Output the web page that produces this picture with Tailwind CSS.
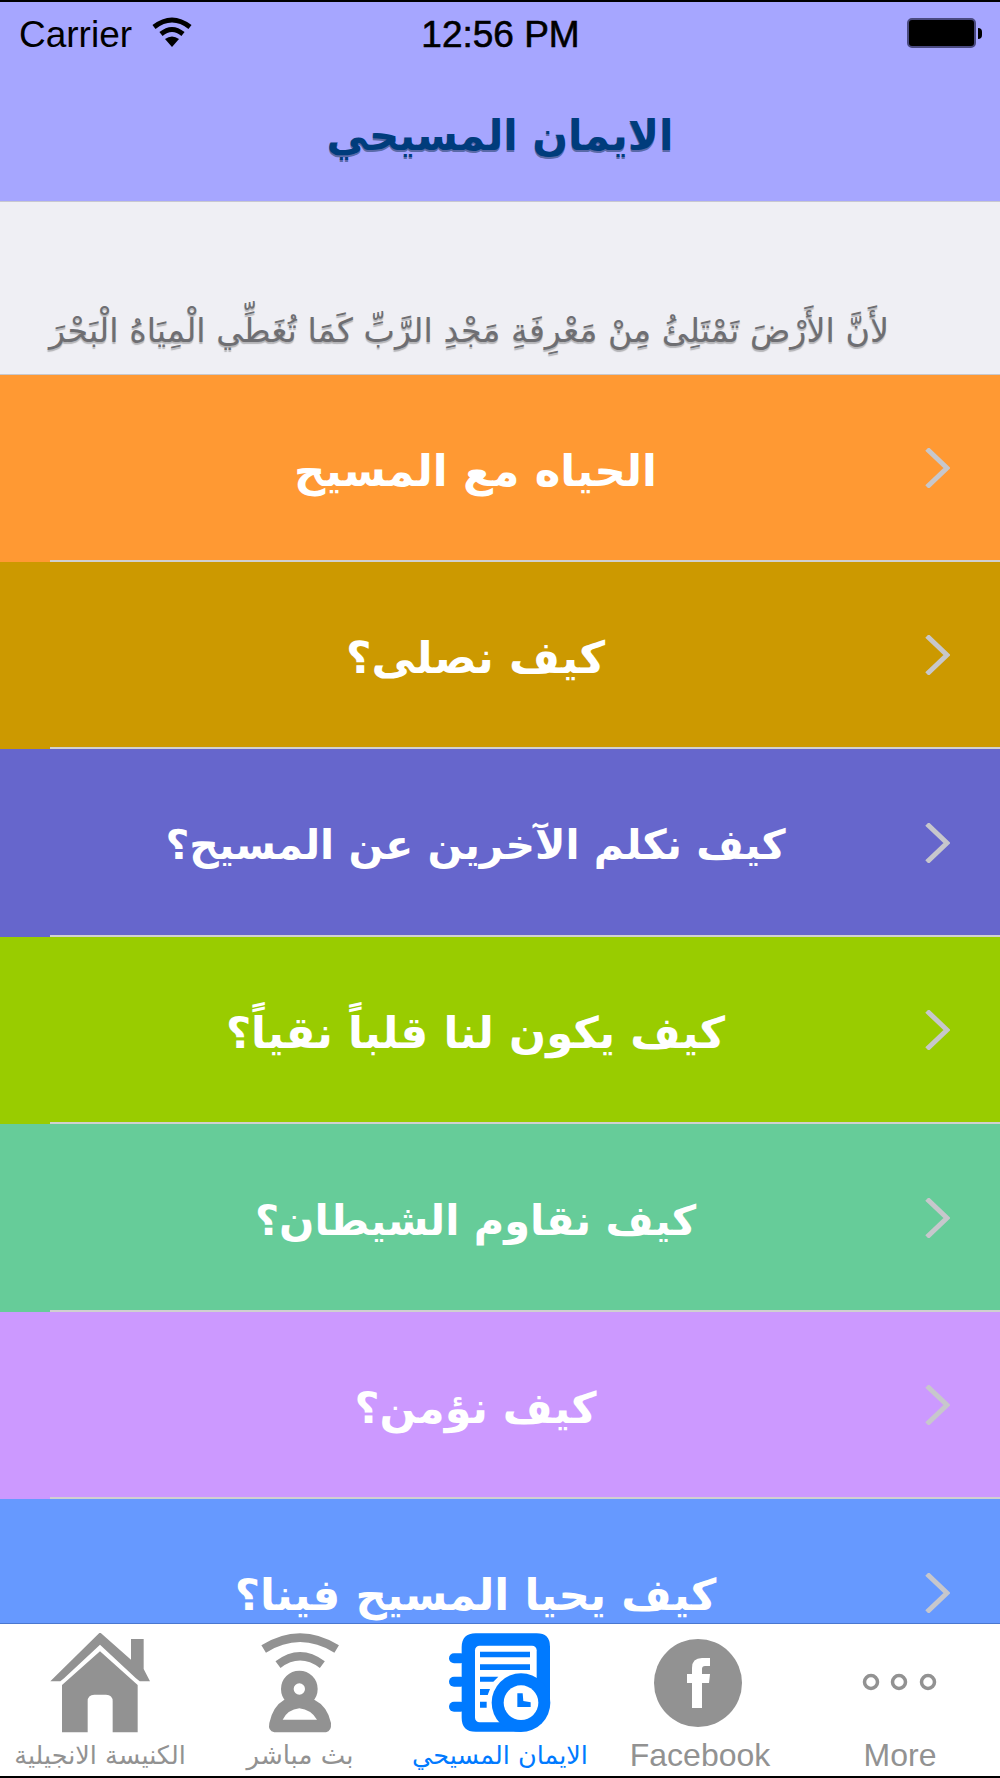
<!DOCTYPE html>
<html lang="ar">
<head>
  <meta charset="UTF-8" />
  <title>الايمان المسيحي</title>
  <script src="https://cdn.jsdelivr.net/npm/@tailwindcss/browser@4"></script>
</head>
<body class="bg-white font-['Liberation_Sans','DejaVu_Sans',sans-serif]">
  <div class="flex flex-col h-[1778px] w-[1000px] overflow-hidden border-y-2 border-black">

    <!-- Header -->
    <header class="h-[200px] shrink-0 bg-[#a6a6ff] border-b border-[#c8c8d0]">
      <div class="grid grid-cols-3 items-center h-[66px] pl-[19px] pr-[18px] text-[37px] text-black">
        <div class="flex items-center gap-[20px]">
          <span>Carrier</span>
          <svg class="w-[40px] h-[30px] mb-[6px]" viewBox="0 0 40 30" fill="none" stroke="black" stroke-width="5">
            <path d="M2 10 Q20 -4 38 10" />
            <path d="M9 17 Q20 8 31 17" />
            <path d="M20 30 L13 22 Q20 17 27 22 Z" fill="black" stroke="none" />
          </svg>
        </div>
        <span class="justify-self-center [-webkit-text-stroke:0.6px_black]">12:56 PM</span>
        <div class="flex items-center justify-self-end mb-[4px] gap-[2px]">
          <div class="w-[69px] h-[30px] rounded-[5px] bg-black border-2 border-[#4a4a80]"></div>
          <div class="w-[4px] h-[11px] bg-black rounded-r-full"></div>
        </div>
      </div>
      <h1 dir="rtl" class="pt-[18px] text-center font-bold text-[42px] leading-[100px] text-[#003c7c] [text-shadow:0_2px_0_#5a6aa8] font-['DejaVu_Sans',sans-serif]">الايمان المسيحي</h1>
    </header>

    <!-- Verse -->
    <section class="h-[173px] shrink-0 flex items-end justify-center bg-[#efeff4] pb-[13px] pr-[62px] border-b border-[#c8c8cc]">
      <p dir="rtl" class="text-[33.4px] leading-[60px] text-[#6e6e72] [text-shadow:0_2px_1px_#b5b5b8] whitespace-nowrap font-['DejaVu_Sans',sans-serif]">لأَنَّ الأَرْضَ تَمْتَلِئُ مِنْ مَعْرِفَةِ مَجْدِ الرَّبِّ كَمَا تُغَطِّي الْمِيَاهُ الْبَحْرَ</p>
    </section>

    <!-- List -->
    <main class="flex-1 min-h-0 overflow-hidden font-['DejaVu_Sans',sans-serif]">
      <a class="relative flex items-center h-[186.5px] bg-[#ff9933] pl-[26px] pr-[50px]">
        <span dir="rtl" class="flex-1 text-center text-white font-bold text-[43.5px] pt-[6px]">الحياه مع المسيح</span>
        <svg class="w-[25px] h-[40px]" viewBox="0 0 25 40" fill="none" stroke="#c7c7cc" stroke-width="5"><path d="M2 1 L22 20 L2 39" /></svg>
        <div class="absolute bottom-0 left-[50px] right-0 h-[2px] bg-[#d0d0d0]"></div>
      </a>
      <a class="relative flex items-center h-[187.5px] bg-[#cc9900] pl-[26px] pr-[50px]">
        <span dir="rtl" class="flex-1 text-center text-white font-bold text-[44px] pt-[6px]">كيف نصلى؟</span>
        <svg class="w-[25px] h-[40px]" viewBox="0 0 25 40" fill="none" stroke="#c7c7cc" stroke-width="5"><path d="M2 1 L22 20 L2 39" /></svg>
        <div class="absolute bottom-0 left-[50px] right-0 h-[2px] bg-[#d0d0d0]"></div>
      </a>
      <a class="relative flex items-center h-[187.5px] bg-[#6666cc] pl-[26px] pr-[50px]">
        <span dir="rtl" class="flex-1 text-center text-white font-bold text-[41px] pt-[6px]">كيف نكلم الآخرين عن المسيح؟</span>
        <svg class="w-[25px] h-[40px]" viewBox="0 0 25 40" fill="none" stroke="#c7c7cc" stroke-width="5"><path d="M2 1 L22 20 L2 39" /></svg>
        <div class="absolute bottom-0 left-[50px] right-0 h-[2px] bg-[#d0d0d0]"></div>
      </a>
      <a class="relative flex items-center h-[187.5px] bg-[#99cc00] pl-[26px] pr-[50px]">
        <span dir="rtl" class="flex-1 text-center text-white font-bold text-[43.5px] pt-[6px]">كيف يكون لنا قلباً نقياً؟</span>
        <svg class="w-[25px] h-[40px]" viewBox="0 0 25 40" fill="none" stroke="#c7c7cc" stroke-width="5"><path d="M2 1 L22 20 L2 39" /></svg>
        <div class="absolute bottom-0 left-[50px] right-0 h-[2px] bg-[#d0d0d0]"></div>
      </a>
      <a class="relative flex items-center h-[187.5px] bg-[#66cc99] pl-[26px] pr-[50px]">
        <span dir="rtl" class="flex-1 text-center text-white font-bold text-[41.5px] pt-[6px]">كيف نقاوم الشيطان؟</span>
        <svg class="w-[25px] h-[40px]" viewBox="0 0 25 40" fill="none" stroke="#c7c7cc" stroke-width="5"><path d="M2 1 L22 20 L2 39" /></svg>
        <div class="absolute bottom-0 left-[50px] right-0 h-[2px] bg-[#d0d0d0]"></div>
      </a>
      <a class="relative flex items-center h-[187.5px] bg-[#cc99ff] pl-[26px] pr-[50px]">
        <span dir="rtl" class="flex-1 text-center text-white font-bold text-[43px] pt-[6px]">كيف نؤمن؟</span>
        <svg class="w-[25px] h-[40px]" viewBox="0 0 25 40" fill="none" stroke="#c7c7cc" stroke-width="5"><path d="M2 1 L22 20 L2 39" /></svg>
        <div class="absolute bottom-0 left-[50px] right-0 h-[2px] bg-[#d0d0d0]"></div>
      </a>
      <a class="relative flex items-center h-[187.5px] bg-[#6699ff] pl-[26px] pr-[50px]">
        <span dir="rtl" class="flex-1 text-center text-white font-bold text-[43.5px] pt-[6px]">كيف يحيا المسيح فينا؟</span>
        <svg class="w-[25px] h-[40px]" viewBox="0 0 25 40" fill="none" stroke="#c7c7cc" stroke-width="5"><path d="M2 1 L22 20 L2 39" /></svg>
      </a>
    </main>

    <!-- Tab bar -->
    <nav class="h-[153px] shrink-0 grid grid-cols-5 bg-white border-t border-[#4a78d0] text-[#929292] font-['Liberation_Sans','DejaVu_Sans',sans-serif]">
      <div class="flex flex-col items-center pt-[9px]">
        <svg class="w-[100px] h-[100px]" viewBox="147 70 300 300" fill="#929292">
          <path d="M297 68 L390 150 V88 H428 V178 L447 215 H416 L404 205 L297 105 L190 205 L178 215 H148 Z" />
          <path d="M297 125 L410 226 V368 H335 V275 Q335 255 315 255 H280 Q260 255 260 275 V368 H183 V226 Z" />
        </svg>
        <span dir="rtl" class="text-[25.5px] leading-[36px] mt-[4px] whitespace-nowrap font-['DejaVu_Sans',sans-serif]">الكنيسة الانجيلية</span>
      </div>
      <div class="flex flex-col items-center pt-[9px]">
        <svg class="w-[100px] h-[100px]" viewBox="747 70 300 300" fill="none" stroke="#929292">
          <path d="M788 118 Q897 50 1007 118" stroke-width="26" />
          <path d="M831 165 Q897 115 964 165" stroke-width="25" />
          <circle cx="895" cy="238" r="36" stroke-width="38" />
          <path fill="#929292" stroke="none" fill-rule="evenodd" d="M820 368 Q800 365 805 340 Q815 290 850 270 H940 Q980 290 990 340 Q992 365 975 368 Z M845 330 Q860 300 895 296 Q930 300 948 330 Z" />
        </svg>
        <span dir="rtl" class="text-[26px] leading-[36px] mt-[4px] whitespace-nowrap font-['DejaVu_Sans',sans-serif]">بث مباشر</span>
      </div>
      <div class="flex flex-col items-center pt-[9px] text-[#007aff]">
        <svg class="w-[100px] h-[100px] overflow-visible" viewBox="30 24 300 300" fill="#007aff">
          <path d="M107 25 H290 Q330 25 330 65 V233 H243 V320 H107 Q65 320 65 278 V67 Q65 25 107 25 Z" />
          <rect x="27" y="85" width="50" height="30" rx="15" />
          <rect x="27" y="155" width="50" height="30" rx="15" />
          <rect x="27" y="230" width="50" height="30" rx="15" />
          <rect x="105" y="62" width="185" height="230" rx="14" fill="white" />
          <path d="M120 80 H270 V97 H120 Z M120 118 H270 V135 H120 Z M120 155 H175 L160 170 H120 Z M120 192 H150 L143 210 H120 Z M120 230 H140 V248 H120 Z" />
          <circle cx="243" cy="233" r="88" />
          <circle cx="243" cy="233" r="52" fill="white" />
          <path d="M232 205 H248 L250 228 L272 232 V246 H232 Z" />
        </svg>
        <span dir="rtl" class="text-[25.5px] leading-[36px] mt-[4px] whitespace-nowrap font-['DejaVu_Sans',sans-serif]">الايمان المسيحي</span>
      </div>
      <div class="flex flex-col items-center pt-[9px]">
        <svg class="w-[100px] h-[100px]" viewBox="0 0 100 100">
          <circle cx="48" cy="50" r="44" fill="#929292" />
          <path d="M42 75 V50 H37 V41 H42 V35 Q42 25 52 25 H60 V33 H55 Q52 33 52 36 V41 H60 L59 50 H52 V75 Z" fill="white" />
        </svg>
        <span class="text-[32px] leading-[36px] mt-[4px]">Facebook</span>
      </div>
      <div class="flex flex-col items-center pt-[9px]">
        <svg class="w-[100px] h-[100px]" viewBox="0 0 100 100" fill="none" stroke="#929292" stroke-width="3.5">
          <circle cx="21" cy="49" r="6.5" />
          <circle cx="49" cy="49" r="6.5" />
          <circle cx="78" cy="49" r="6.5" />
        </svg>
        <span class="text-[32px] leading-[36px] mt-[4px]">More</span>
      </div>
    </nav>
  </div>
</body>
</html>
